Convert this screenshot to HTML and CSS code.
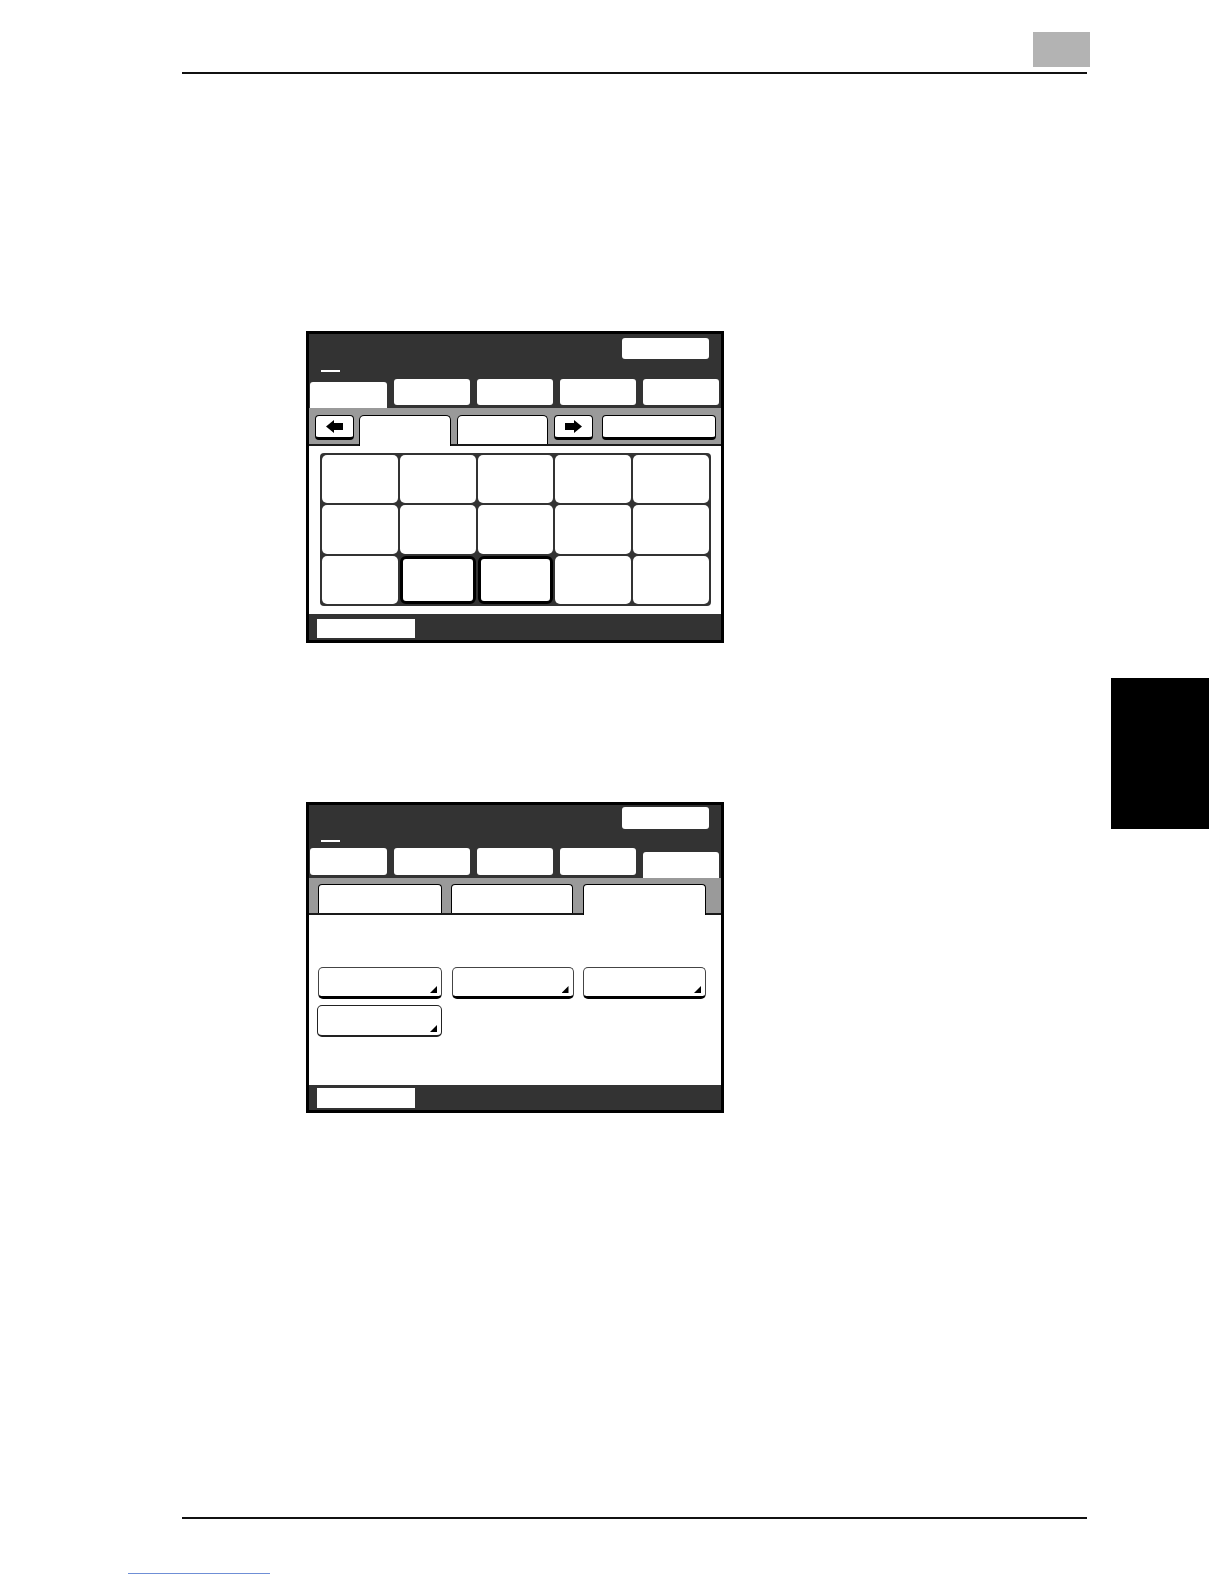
FILE: index.html
```html
<!DOCTYPE html>
<html lang="en">
<head>
<meta charset="utf-8">
<title>Screens</title>
<link rel="stylesheet" href="styles.css">
</head>
<body>
<div class="page">
  <div class="chapter-box"></div>
  <div class="rule rule-top"></div>

  <div class="screen screen-1">
    <div class="hdr hdr-1">
      <div class="hdr-top"><div class="hbtn"></div></div>
      <div class="cursor"></div>
      <div class="tabs">
        <div class="tab first active"></div>
        <div class="tab"></div>
        <div class="tab"></div>
        <div class="tab"></div>
        <div class="tab"></div>
      </div>
    </div>
    <div class="navbar">
      <div class="abtn">
        <svg width="17" height="13" viewBox="0 0 17 13"><polygon points="0,6.5 8,0 8,3 17,3 17,10 8,10 8,13" fill="#000"/></svg>
      </div>
      <div class="ntab active ntab-a"></div>
      <div class="ntab ntab-b"></div>
      <div class="abtn abtn-r">
        <svg width="17" height="13" viewBox="0 0 17 13"><polygon points="17,6.5 9,0 9,3 0,3 0,10 9,10 9,13" fill="#000"/></svg>
      </div>
      <div class="wbtn"></div>
    </div>
    <div class="content-1">
      <div class="keygrid">
        <div class="key"></div><div class="key"></div><div class="key"></div><div class="key"></div><div class="key"></div>
        <div class="key"></div><div class="key"></div><div class="key"></div><div class="key"></div><div class="key"></div>
        <div class="key"></div><div class="key sel"></div><div class="key sel"></div><div class="key"></div><div class="key"></div>
      </div>
    </div>
    <div class="ftr ftr-1"><div class="fbtn"></div></div>
  </div>

  <div class="screen screen-2">
    <div class="hdr hdr-2">
      <div class="hdr-top"><div class="hbtn"></div></div>
      <div class="cursor"></div>
      <div class="tabs">
        <div class="tab first"></div>
        <div class="tab"></div>
        <div class="tab"></div>
        <div class="tab"></div>
        <div class="tab active"></div>
      </div>
    </div>
    <div class="subbar">
      <div class="stab stab-a"></div>
      <div class="stab stab-b"></div>
      <div class="stab stab-c active"></div>
    </div>
    <div class="content-2">
      <div class="btngrid">
        <div class="tbtn"><span class="tri"></span></div>
        <div class="tbtn"><span class="tri"></span></div>
        <div class="tbtn"><span class="tri"></span></div>
        <div class="tbtn row2"><span class="tri"></span></div>
      </div>
    </div>
    <div class="ftr ftr-2"><div class="fbtn"></div></div>
  </div>

  <div class="rule rule-bottom"></div>
  <div class="link-line"></div>

  <div class="side-tab"></div>
</div>
</body>
</html>
```

FILE: styles.css
```css
html, body {
  margin: 0;
  padding: 0;
  background: #fff;
  font-family: "Liberation Sans", Arial, sans-serif;
}

.page {
  position: relative;
  width: 1224px;
  height: 1584px;
  padding-top: 32px;
  box-sizing: border-box;
  overflow: hidden;
}

.chapter-box {
  margin-left: 1033px;
  width: 57px;
  height: 35px;
  background: #b3b3b3;
}

.rule {
  height: 2px;
  background: #111;
  margin-left: 182px;
  width: 905px;
}

.rule-top {
  margin-top: 5px;
}

/* ---------- screens ---------- */
.screen {
  box-sizing: border-box;
  width: 418px;
  margin-left: 306px;
  border: 3px solid #000;
  background: #fff;
  display: flex;
  flex-direction: column;
}

.screen-1 {
  margin-top: 257px;
  height: 312px;
}

.screen-2 {
  margin-top: 159px;
  height: 311px;
}

.hdr {
  background: #333;
  box-sizing: border-box;
  flex: 0 0 auto;
}

.hdr-1 {
  height: 74px;
  padding-top: 4px;
}

.hdr-2 {
  height: 73px;
  padding-top: 2px;
}

.hdr-top {
  display: flex;
  justify-content: flex-end;
  padding-right: 12px;
}

.hbtn {
  width: 87px;
  height: 21px;
  background: #fff;
  border-radius: 3px;
}

.hdr-2 .hbtn {
  height: 22px;
}

.cursor {
  width: 19px;
  height: 2px;
  background: #fff;
  margin: 11px 0 0 12px;
}

.tabs {
  display: flex;
  align-items: flex-end;
  gap: 7px;
  padding-left: 1px;
  margin-top: 7px;
  height: 29px;
}

.hdr-2 .tabs {
  margin-top: 6px;
  height: 30px;
}

.tab {
  flex: 0 0 76px;
  height: 26px;
  margin-bottom: 3px;
  background: #fff;
  border-radius: 3px;
}

.hdr-2 .tab {
  height: 27px;
}

.tab.first {
  flex-basis: 77px;
}

.tab.active,
.hdr-2 .tab.active {
  height: 26px;
  margin-bottom: 0;
  border-radius: 3px 3px 0 0;
}

/* ---------- screen 1 nav bar ---------- */
.navbar {
  flex: 0 0 auto;
  height: 38px;
  box-sizing: border-box;
  background: #9a9a9a;
  border-bottom: 2px solid #1a1a1a;
  display: flex;
  align-items: flex-start;
  padding: 7px 0 0 6px;
}

.abtn,
.wbtn {
  box-sizing: border-box;
  height: 25px;
  background: #fff;
  border: 1.5px solid #000;
  border-bottom-width: 3px;
  border-radius: 4px;
  display: flex;
  align-items: center;
  justify-content: center;
}

.abtn {
  width: 39px;
}

.abtn-r {
  margin-left: 6px;
}

.wbtn {
  width: 114px;
  margin-left: 9px;
}

.ntab {
  box-sizing: border-box;
  height: 29px;
  background: #fff;
  border: 1.5px solid #000;
  border-bottom: none;
  border-radius: 5px 5px 0 0;
}

.ntab.active {
  height: 31px;
  position: relative;
}

.ntab-a {
  width: 92px;
  margin-left: 5px;
}

.ntab-b {
  width: 91px;
  margin-left: 6px;
}

/* ---------- screen 1 key grid ---------- */
.content-1 {
  flex: 0 0 auto;
  height: 168px;
  box-sizing: border-box;
  padding: 7px 0 0 11px;
}

.keygrid {
  width: 391px;
  height: 153px;
  box-sizing: border-box;
  background: #333;
  padding: 2px;
  gap: 2px;
  border-radius: 4px;
  display: grid;
  grid-template-columns: repeat(5, 1fr);
  grid-template-rows: repeat(3, 1fr);
}

.key {
  background: #fff;
  border-radius: 5px;
}

.key.sel {
  box-sizing: border-box;
  border: 3px solid #000;
  border-radius: 6px;
}

/* ---------- footers ---------- */
.ftr {
  flex: 0 0 auto;
  background: #333;
  box-sizing: border-box;
}

.ftr-1 {
  height: 26px;
  padding: 5px 0 0 8px;
}

.ftr-2 {
  height: 25px;
  padding: 3px 0 0 8px;
}

.fbtn {
  width: 98px;
  height: 19px;
  background: #fff;
}

.ftr-2 .fbtn {
  height: 20px;
}

/* ---------- screen 2 sub tab bar ---------- */
.subbar {
  flex: 0 0 auto;
  height: 37px;
  box-sizing: border-box;
  background: #9a9a9a;
  border-bottom: 2px solid #1a1a1a;
  display: flex;
  align-items: flex-start;
  padding: 6px 0 0 9px;
}

.stab {
  box-sizing: border-box;
  height: 29px;
  background: #fff;
  border: 1.5px solid #000;
  border-bottom: none;
  border-radius: 4px 4px 0 0;
}

.stab.active {
  height: 31px;
  position: relative;
}

.stab-a {
  width: 124px;
}

.stab-b {
  width: 122px;
  margin-left: 9px;
}

.stab-c {
  width: 123px;
  margin-left: 10px;
}

/* ---------- screen 2 buttons ---------- */
.content-2 {
  flex: 0 0 auto;
  height: 170px;
  box-sizing: border-box;
  padding: 52px 0 0 9px;
}

.btngrid {
  display: grid;
  grid-template-columns: 124px 122px 123px;
  grid-auto-rows: 32px;
  column-gap: 9.5px;
  row-gap: 6px;
}

.tbtn {
  box-sizing: border-box;
  background: #fff;
  border: 1.5px solid #444;
  border-bottom: 3px solid #000;
  border-radius: 5px;
  display: flex;
  justify-content: flex-end;
  align-items: flex-end;
  padding: 0 4px 3px 0;
}

.tbtn.row2 {
  margin-left: -1px;
  border-bottom-width: 2px;
  border-color: #222;
}

.tri {
  display: block;
  width: 7px;
  height: 7px;
  background: #000;
  clip-path: polygon(100% 0, 100% 100%, 0 100%);
}

/* ---------- page bottom ---------- */
.rule-bottom {
  margin-top: 404px;
}

.link-line {
  margin-top: 54px;
  margin-left: 128px;
  width: 142px;
  height: 1px;
  background: #6f8fd6;
}

.side-tab {
  position: absolute;
  left: 1111px;
  top: 678px;
  width: 98px;
  height: 151px;
  background: #000;
}
```
